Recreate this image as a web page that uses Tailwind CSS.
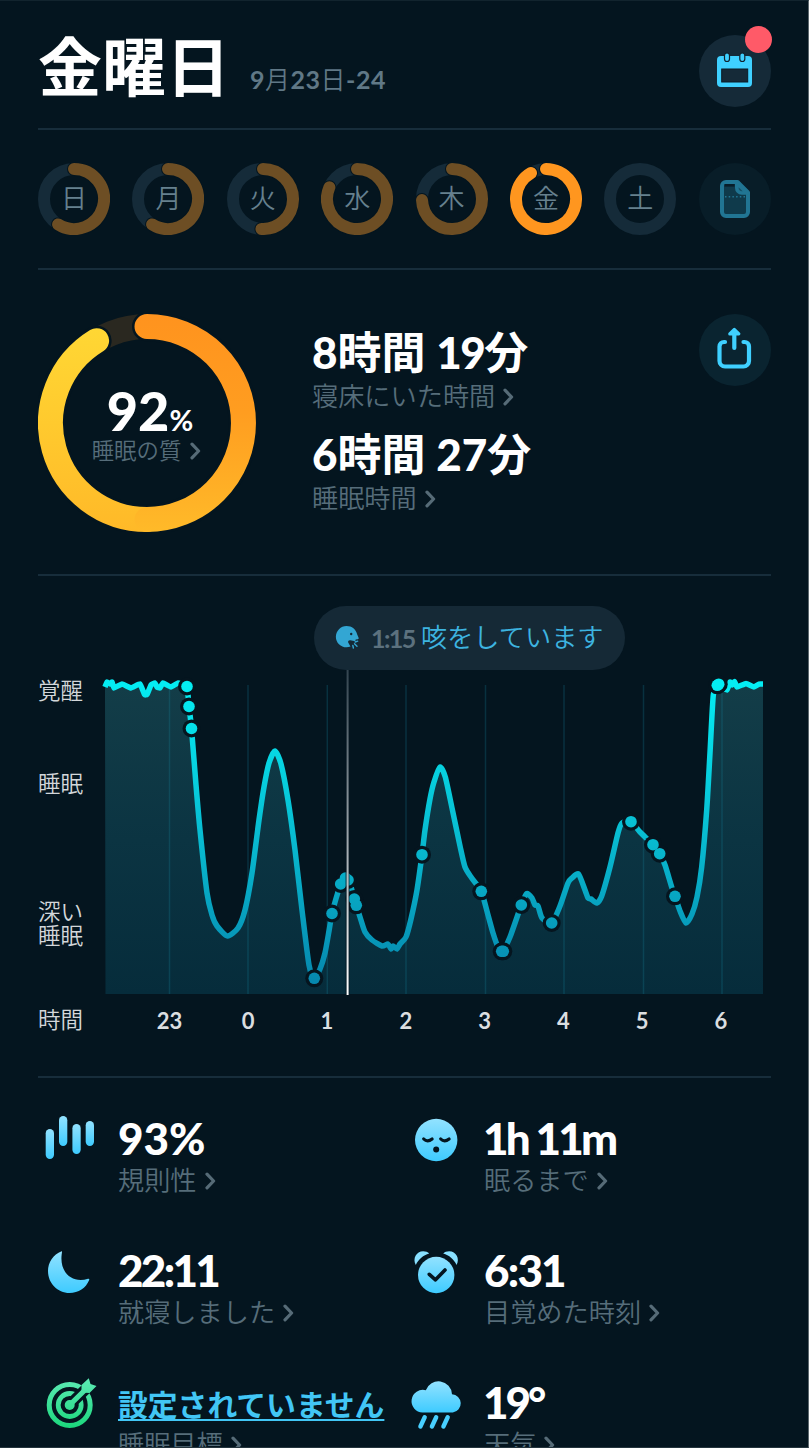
<!DOCTYPE html>
<html lang="ja">
<head>
    <meta charset="UTF-8">
    <meta name="viewport" content="width=device-width, initial-scale=1.0">
    <title>金曜日 - 睡眠</title>
    <script src="https://cdn.jsdelivr.net/npm/@tailwindcss/browser@4"></script>
    <style>
        body {
            font-family: Lato, 'Noto Sans CJK JP', sans-serif;
        }
    </style>
</head>
<body class="bg-[#04151f]">
    <!-- shared symbols and gradients -->
    <svg width="0" height="0" class="absolute">
        <defs>
            <symbol id="chevron" viewBox="0 0 11 18"><path d="M2 2.2 8.6 9 2 15.8" fill="none" stroke="#566b77" stroke-width="3.2" stroke-linecap="round" stroke-linejoin="round"/></symbol>
            <linearGradient id="sky" x1="0" y1="0" x2="0" y2="1"><stop offset="0" stop-color="#92e2ff"/><stop offset="1" stop-color="#3ecbff"/></linearGradient>
        </defs>
    </svg>

    <main class="flex h-[1448px] w-full flex-col overflow-hidden border-t border-r border-b border-t-[#12242e] border-r-[#5d686e] border-b-[#25353e] pr-[37px] pl-[38px]">
        <!-- header -->
        <header class="flex h-[127px] shrink-0 justify-between">
            <div class="flex">
                <h1 class="mt-[20px] text-[64px] leading-[92px] font-bold text-white">金曜日</h1>
                <p class="mt-[58px] ml-[20px] text-[25px] leading-[40px] font-bold tracking-[0.5px] text-[#607886]">9<span class="font-[350]">月</span>23<span class="font-[350]">日</span>-24</p>
            </div>
            <button class="relative mt-[34px] size-[72px] rounded-full bg-[#152a38]">
                <svg viewBox="699 35 72 72" class="size-[72px]">
                    <rect x="717" y="56" width="35" height="31" rx="4" fill="#3fd0ff"/>
                    <rect x="721.7" y="69" width="26" height="13" fill="#152a38" stroke="#0b1b26"/>
                    <rect x="724.5" y="53" width="5" height="8.5" rx="2.5" fill="#3fd0ff" stroke="#10222e" stroke-width="1.2"/>
                    <rect x="739.8" y="53" width="5" height="8.5" rx="2.5" fill="#3fd0ff" stroke="#10222e" stroke-width="1.2"/>
                </svg>
                <span class="absolute -top-[9px] -right-px size-[27px] rounded-full bg-[#ff5a68]"></span>
            </button>
        </header>

        <!-- week days -->
        <section class="flex h-[140px] shrink-0 items-start justify-between border-t-2 border-[#172d3b] pt-[33px]">
            <div id="week" class="flex gap-[22.4px]"></div>
            <button class="size-[72px] rounded-full bg-[#081d28]">
                <svg viewBox="699 163 72 72" class="size-[72px]" fill="none" stroke="#217593" stroke-width="4" stroke-linejoin="round">
                    <path d="M726 182h11.5L748 192.500V212a4 4 0 0 1-4 4H726a4 4 0 0 1-4-4v-26a4 4 0 0 1 4-4z" fill="#0f3a4b"/>
                    <path d="M724.500 185.300h10" stroke="#081d28" stroke-width="2.600"/>
                    <path d="M736.800 183v5a5 5 0 0 0 5 5H747z" fill="#164f65" stroke-width="3.600"/>
                    <path d="M725 196.700h21" stroke-width="1.500" stroke-dasharray="1.500 2.200"/>
                </svg>
            </button>
        </section>

        <!-- summary -->
        <section class="flex h-[306px] shrink-0 border-t-2 border-[#172d3b]">
            <div class="relative mt-[44px] -ml-[0.5px] size-[218px]">
                <svg viewBox="0 0 218 218" class="size-[218px]" fill="none">
                    <defs>
                        <linearGradient id="ringRight" gradientUnits="userSpaceOnUse" x1="0" y1="0" x2="0" y2="218"><stop stop-color="#ff931e"/><stop offset=".45" stop-color="#ff9d20"/><stop offset="1" stop-color="#ffba29"/></linearGradient>
                        <linearGradient id="ringLeft" gradientUnits="userSpaceOnUse" x1="0" y1="218" x2="0" y2="0"><stop stop-color="#ffb928"/><stop offset=".5" stop-color="#ffca2e"/><stop offset="1" stop-color="#ffd935"/></linearGradient>
                    </defs>
                    <circle cx="109" cy="109" r="96.500" stroke="#2a2820" stroke-width="25"/>
                    <path d="M58.600 26.700A96.500 96.500 0 1 0 109 12.500" stroke="#04151f" stroke-width="30" stroke-linecap="round"/>
                    <path d="M109 205.500A96.500 96.500 0 0 1 58.600 26.700" stroke="url(#ringLeft)" stroke-width="25" stroke-linecap="round"/>
                    <path d="M109 12.500A96.500 96.500 0 0 1 109 205.500" stroke="url(#ringRight)" stroke-width="25" stroke-linecap="round"/>
                </svg>
                <div class="absolute inset-0 flex flex-col items-center">
                    <p class="mt-[77px] ml-[7px] flex h-[46px] items-baseline text-white"><span class="text-[54px] leading-[40px] font-black">92</span><span class="text-[29px] leading-[40px] font-bold">%</span></p>
                    <p class="flex items-center gap-[9px] text-[22.4px] leading-[28px] font-[350] text-[#566d7a]">睡眠の質<svg class="h-[18px] w-[11px]"><use href="#chevron"/></svg></p>
                </div>
            </div>
            <div class="ml-[56.5px] flex-1 pt-[54px]">
                <p class="h-[56px] text-[44px] leading-[56px] font-bold whitespace-pre text-white"><span class="font-black">8</span>時間 <span class="font-black tracking-[-1.5px]">19</span>分</p>
                <p class="flex h-[46px] items-start gap-[8px] text-[26.2px] leading-[32px] font-[350] text-[#566d7a]">寝床にいた時間<svg class="mt-[8px] h-[18px] w-[11px]"><use href="#chevron"/></svg></p>
                <p class="h-[56px] text-[44px] leading-[56px] font-bold whitespace-pre text-white"><span class="font-black">6</span>時間 <span class="font-black">27</span>分</p>
                <p class="flex items-start gap-[8px] text-[26.2px] leading-[32px] font-[350] text-[#566d7a]">睡眠時間<svg class="mt-[8px] h-[18px] w-[11px]"><use href="#chevron"/></svg></p>
            </div>
            <button class="mt-[44px] size-[72px] rounded-full bg-[#0a2430]">
                <svg viewBox="699 314 72 72" class="size-[72px]" fill="none" stroke="#3fd0ff" stroke-width="4.200" stroke-linecap="round" stroke-linejoin="round">
                    <path d="M725 342h-1a4.500 4.500 0 0 0-4.500 4.500V361a5.500 5.500 0 0 0 5.500 5.500h18.500a5.500 5.500 0 0 0 5.500-5.500v-14.500a4.500 4.500 0 0 0-4.500-4.500h-1"/>
                    <path d="M734.300 334v14"/>
                    <path d="M734.300 329.300l4.600 4.600h-9.200z" fill="#3fd0ff" stroke-width="3"/>
                </svg>
            </button>
        </section>

        <!-- sleep chart -->
        <section class="h-[502px] shrink-0 border-t-2 border-[#172d3b] pt-[30px]">
            <div class="ml-[276px] flex h-[64px] w-[311px] items-center rounded-full bg-[#152936] pl-[21px] text-[26px] leading-[32px]">
                <svg viewBox="335 625 26 26" class="size-[26px]" fill="#33a6d3">
                    <path d="M346.500 626c5.500 0 9.500 3.500 10.600 8.200l1.500 3.600c.3.800-.1 1.400-.9 1.500l-2 .2-.4 1.700-5-.9c-1.700-.2-2.600.9-2 2.400l2.200 3.800c-1.200.5-2.500.8-4 .8a10.650 10.650 0 0 1 0-21.300z"/>
                    <circle cx="351.200" cy="634" r="1.200" fill="#152936"/>
                    <path d="M352.800 645.500l.6 2.500M354.500 643.800l2.500 2.500M355.200 642l2.500-.8" stroke="#33a6d3" stroke-width="1.400" stroke-linecap="round"/>
                </svg>
                <span class="ml-[10px] w-[43px] text-[25px] font-bold tracking-[-1.6px] text-[#5c717e]">1:15</span>
                <span class="ml-[7px] -mt-[3px] text-[26.2px] whitespace-nowrap font-[350] text-[#3db4e0]">咳をしています</span>
            </div>
            <div class="flex">
                <div class="w-[67px] text-[22.500px] leading-[24px] font-[350] text-[#d3d7da]">
                    <p class="mt-[9px]">覚醒</p>
                    <p class="mt-[69px]">睡眠</p>
                    <p class="mt-[104px]">深い<br>睡眠</p>
                    <p class="mt-[60px]">時間</p>
                </div>
                <div>
                    <svg viewBox="105 670 658 325" class="h-[325px] w-[658px] overflow-visible" fill="none">
                        <defs>
                            <linearGradient id="area" gradientUnits="userSpaceOnUse" x1="0" y1="685" x2="0" y2="994"><stop stop-color="#133d48"/><stop offset=".5" stop-color="#0b3442"/><stop offset="1" stop-color="#062c3b"/></linearGradient>
                            <linearGradient id="line" gradientUnits="userSpaceOnUse" x1="0" y1="685" x2="0" y2="980"><stop stop-color="#04edf3"/><stop offset=".5" stop-color="#08bdd2"/><stop offset="1" stop-color="#0688ae"/></linearGradient>
                            <linearGradient id="cursor" gradientUnits="userSpaceOnUse" x1="0" y1="670" x2="0" y2="994"><stop stop-color="#33444f"/><stop offset=".5" stop-color="#98a1a7"/><stop offset="1" stop-color="#fff"/></linearGradient>
                        </defs>
                        <path id="areaPath" fill="url(#area)"/>
                        <path d="M169.500 685V994M248 685V994M327.300 685V994M406 685V994M485.500 685V994M564 685V994M643.500 685V994M722 685V994" stroke="#17829a" stroke-opacity=".26" stroke-width="1.500"/>
                        <path id="linePath" stroke="url(#line)" stroke-width="5.500"/>
                        <g id="dotHalos" fill="#05151f"></g>
                        <g id="dots" fill="url(#line)"></g>
                        <path d="M347.500 670V995" stroke="#04151f" stroke-opacity=".7" stroke-width="4"/>
                        <rect x="346.600" y="670" width="2" height="325" fill="url(#cursor)"/>
                    </svg>
                    <div class="mt-[11px] ml-[25px] flex text-center text-[22px] leading-[30px] font-bold text-[#dbdee0]">
                        <span class="w-[78.800px]">23</span>
                        <span class="w-[78.800px]">0</span>
                        <span class="w-[78.800px]">1</span>
                        <span class="w-[78.800px]">2</span>
                        <span class="w-[78.800px]">3</span>
                        <span class="w-[78.800px]">4</span>
                        <span class="w-[78.800px]">5</span>
                        <span class="w-[78.800px]">6</span>
                    </div>
                </div>
            </div>
        </section>

        <!-- statistics -->
        <section class="grid shrink-0 auto-rows-[132px] grid-cols-[366px_366px] border-t-2 border-[#172d3b] pt-[33px]">
            <div class="flex">
                <svg viewBox="38 1111 64 64" class="mr-[16px] size-[64px]" fill="url(#sky)">
                    <rect x="45.700" y="1129" width="8.300" height="30" rx="4.150"/>
                    <rect x="59" y="1116" width="8.300" height="30" rx="4.150"/>
                    <rect x="72.400" y="1124" width="8.300" height="30" rx="4.150"/>
                    <rect x="85.700" y="1121" width="8.300" height="25" rx="4.150"/>
                </svg>
                <div class="-mt-px">
                    <p class="h-[54px] text-[44px] leading-[56px] font-black text-white">93%</p>
                    <p class="flex items-start gap-[8px] text-[26.200px] leading-[32px] font-[350] text-[#566d7a]">規則性<svg class="mt-[8px] h-[18px] w-[11px]"><use href="#chevron"/></svg></p>
                </div>
            </div>
            <div class="flex">
                <svg viewBox="404 1111 64 64" class="mr-[16px] size-[64px]">
                    <circle cx="436.200" cy="1140" r="21.200" fill="url(#sky)"/>
                    <path d="M423.700 1139q3.700 3.800 8.400 0M440.700 1139q3.700 3.800 8.400 0" fill="none" stroke="#04151f" stroke-width="3.200" stroke-linecap="round"/>
                    <circle cx="436.200" cy="1149.600" r="3" fill="#04151f"/>
                </svg>
                <div class="-mt-px">
                    <p class="-ml-px h-[54px] text-[44px] leading-[56px] font-black tracking-[-2.8px] text-white">1h 11m</p>
                    <p class="flex items-start gap-[8px] text-[26.200px] leading-[32px] font-[350] text-[#566d7a]">眠るまで<svg class="mt-[8px] h-[18px] w-[11px]"><use href="#chevron"/></svg></p>
                </div>
            </div>
            <div class="flex">
                <svg viewBox="38 1243 64 64" class="mr-[16px] size-[64px]">
                    <path d="M61.600 1251.200C53 1254.500 48 1262.500 48 1271c0 12.300 9.500 22 21.500 22 9 0 16.500-5 19.700-13 .4-1-.2-1.500-1.200-1.200-15.500 5-28.700-6-26.300-24.500.3-2 .6-3.400-.1-3.100z" fill="url(#sky)"/>
                </svg>
                <div class="-mt-px">
                    <p class="h-[54px] text-[44px] leading-[56px] font-black tracking-[-2.7px] text-white">22:11</p>
                    <p class="flex items-start gap-[8px] text-[26.200px] leading-[32px] font-[350] text-[#566d7a]">就寝しました<svg class="mt-[8px] h-[18px] w-[11px]"><use href="#chevron"/></svg></p>
                </div>
            </div>
            <div class="flex">
                <svg viewBox="404 1243 64 64" class="mr-[16px] size-[64px]" fill="url(#sky)">
                    <path d="M415.800 1265c-3.500-6.500.5-13.800 7.400-13.800 2.500 0 4.600.9 6 2.300-6 1.800-10.500 5.500-13.400 11.500zM456.600 1265c3.500-6.500-.5-13.800-7.400-13.800-2.500 0-4.600.9-6 2.300 6 1.800 10.500 5.500 13.400 11.500z" fill="#88e0ff"/>
                    <circle cx="436.200" cy="1275" r="18.200"/>
                    <path d="M429.300 1274.300l6.200 5.500 9.500-9.800" fill="none" stroke="#04151f" stroke-width="3.600" stroke-linecap="round" stroke-linejoin="round"/>
                </svg>
                <div class="-mt-px">
                    <p class="h-[54px] text-[44px] leading-[56px] font-black tracking-[-1.8px] text-white">6:31</p>
                    <p class="flex items-start gap-[8px] text-[26.200px] leading-[32px] font-[350] text-[#566d7a]">目覚めた時刻<svg class="mt-[8px] h-[18px] w-[11px]"><use href="#chevron"/></svg></p>
                </div>
            </div>
            <div class="flex">
                <svg viewBox="38 1375 64 64" class="mr-[16px] size-[64px]" fill="none">
                    <defs><linearGradient id="goal" gradientUnits="userSpaceOnUse" x1="0" y1="1379" x2="0" y2="1428"><stop stop-color="#5ceab4"/><stop offset="1" stop-color="#1bd77c"/></linearGradient></defs>
                    <circle cx="69.700" cy="1405" r="20.500" stroke="url(#goal)" stroke-width="5"/>
                    <circle cx="69.700" cy="1405" r="11.500" stroke="url(#goal)" stroke-width="4.800"/>
                    <path d="M72 1402.500L92 1383" stroke="#04151f" stroke-width="11"/>
                    <circle cx="69.700" cy="1405" r="5" fill="url(#goal)"/>
                    <path d="M69.700 1405L87 1388" stroke="url(#goal)" stroke-width="5.200" stroke-linecap="round"/>
                    <path d="M81.500 1392.500v-7.500l7.300-6.700 1.700 5.700 6 2-7 7z" fill="url(#goal)"/>
                </svg>
                <div class="-mt-px">
                    <p class="h-[54px] pt-[7px] text-[29.800px] leading-[48px] font-bold whitespace-nowrap text-[#42c6f5] underline decoration-2 underline-offset-[3px]">設定されていません</p>
                    <p class="flex items-start gap-[8px] text-[26.200px] leading-[32px] font-[350] text-[#566d7a]">睡眠目標<svg class="mt-[8px] h-[18px] w-[11px]"><use href="#chevron"/></svg></p>
                </div>
            </div>
            <div class="flex">
                <svg viewBox="404 1375 64 64" class="mr-[16px] size-[64px]">
                    <path d="M422.500 1412.500a11.300 11.300 0 1 1 3.300-22.200 13.500 13.500 0 0 1 26.200 3.900 9.200 9.200 0 0 1 .8 18.300z" fill="url(#sky)"/>
                    <path d="M424.700 1417.300l-4.300 9.200M436.200 1417.300l-4.300 9.200M447.700 1417.300l-4.300 9.200" stroke="#48cfff" stroke-width="4.400" stroke-linecap="round"/>
                </svg>
                <div class="-mt-px">
                    <p class="-ml-px h-[54px] text-[44px] leading-[56px] font-black tracking-[-3px] text-white">19°</p>
                    <p class="flex items-start gap-[8px] text-[26.200px] leading-[32px] font-[350] text-[#566d7a]">天気<svg class="mt-[8px] h-[18px] w-[11px]"><use href="#chevron"/></svg></p>
                </div>
            </div>
        </section>
    </main>

    <script>
        // end angle of each day's ring, clockwise from the top
        const days = [
            { name: '日', end: 212 },
            { name: '月', end: 212 },
            { name: '火', end: 183 },
            { name: '水', end: 293 },
            { name: '木', end: 268 },
            { name: '金', end: 330, active: true },
            { name: '土', end: 0 }
        ];

        document.getElementById('week').innerHTML = days.map(day => {
            const a = day.end * Math.PI / 180;
            const d = `M36 6A30 30 0 ${day.end > 180 ? 1 : 0} 1 ${36 + 30 * Math.sin(a)} ${36 - 30 * Math.cos(a)}`;
            const arc = day.end ? `
                <path d="${d}" stroke="#04151f" stroke-width="14"/>
                <path d="${d}" stroke="${day.active ? '#ff961f' : '#6d4e24'}" stroke-width="12"/>` : '';
            return `<div class="relative size-[72px]">
                <svg viewBox="0 0 72 72" class="size-[72px]" fill="none" stroke-linecap="round">
                    <circle cx="36" cy="36" r="30" stroke="#152b39" stroke-width="12"/>${arc}
                </svg>
                <span class="absolute inset-0 text-center text-[26px] leading-[70px] font-[350] text-[#66808e]">${day.name}</span>
            </div>`;
        }).join('');

        const points = [
            [105, 687], [107, 682], [110, 684], [112, 682], [114, 688], [122, 684], [131, 688], [140, 684], [144.5, 694.5], [147, 694.5], [151, 685],
            [155, 683], [157, 687], [160, 688], [163, 683], [171, 687], [178, 683], [187, 686.5], [189, 706.5], [191.5, 728.5],
            [196, 785], [200, 830], [207, 893], [212, 915], [217, 926], [227.5, 936], [238, 928], [245, 910], [252, 873],
            [259, 820], [264, 787], [269, 763], [275, 751], [281, 764], [288, 800], [295, 850], [302, 910], [309, 965],
            [314.3, 978.3], [320, 969], [325, 953], [329, 931], [332, 913.5], [338, 892], [341, 884], [346, 878.5], [349, 880],
            [354.3, 899], [356.3, 905.3], [360, 917], [365, 932], [372, 940], [382, 946], [388, 944], [391, 949], [393, 946], [397, 949],
            [400, 944], [406, 937], [411, 919], [417, 890], [422, 854.7], [425, 830], [430, 799], [434, 782], [440, 767],
            [445.3, 777], [452, 808], [460, 846], [465, 867], [471.7, 878], [481.3, 891.3], [488, 915], [493, 933], [498, 947],
            [502.3, 951.3], [510, 937], [521.3, 905], [526.7, 893.5], [532, 898], [535, 905], [538, 906], [542, 918], [551.7, 923],
            [560, 906], [568, 883], [572, 878], [578.5, 874], [585, 890], [588, 898], [591, 899], [596.7, 903], [601.7, 896], [610, 867],
            [618, 833], [622, 823], [631, 821.7], [640, 832], [653, 844.7], [659.7, 853.7], [665, 865], [671.7, 887],
            [675, 896.3], [680, 911], [686, 923], [692, 914], [697, 897], [701.7, 867], [706.7, 810], [710, 753], [713.3, 695],
            [717.5, 685], [727, 690], [730, 682], [732, 685], [734.500, 681.500], [737, 687], [746, 683.5], [754, 687], [759, 684], [763, 684]
        ];

        const dots = [
            [187, 686.5], [189, 706.5], [191.5, 728.5], [314.3, 978.3], [332, 913.5], [340.7, 884], [345.5, 878], [348, 880],
            [354.3, 899], [356.3, 905.3], [422, 854.7], [481.3, 891.3], [501.7, 951.3], [503.3, 951.3], [521.3, 905],
            [551.7, 923], [631, 821.7], [653, 844.7], [659.7, 853.7], [675, 896.3], [717.3, 685.3], [718.7, 684.2]
        ];

        // Catmull-Rom spline through all points
        let d = `M${points[0]}`;
        for (let i = 0; i < points.length - 1; i++) {
            const p0 = points[i - 1] || points[i];
            const p1 = points[i];
            const p2 = points[i + 1];
            const p3 = points[i + 2] || p2;
            const t = p1[1] < 700 ? 20 : 9;
            const c1 = [p1[0] + (p2[0] - p0[0]) / t, p1[1] + (p2[1] - p0[1]) / t];
            const c2 = [p2[0] - (p3[0] - p1[0]) / t, p2[1] - (p3[1] - p1[1]) / t];
            d += `C${c1} ${c2} ${p2}`;
        }
        document.getElementById('linePath').setAttribute('d', d);
        document.getElementById('areaPath').setAttribute('d', d + 'V994H105.500Z');
        document.getElementById('dotHalos').innerHTML = dots.map(([x, y]) => `<circle cx="${x}" cy="${y}" r="9"/>`).join('');
        document.getElementById('dots').innerHTML = dots.map(([x, y]) => `<circle cx="${x}" cy="${y}" r="5.800"/>`).join('');
    </script>
</body>
</html>
